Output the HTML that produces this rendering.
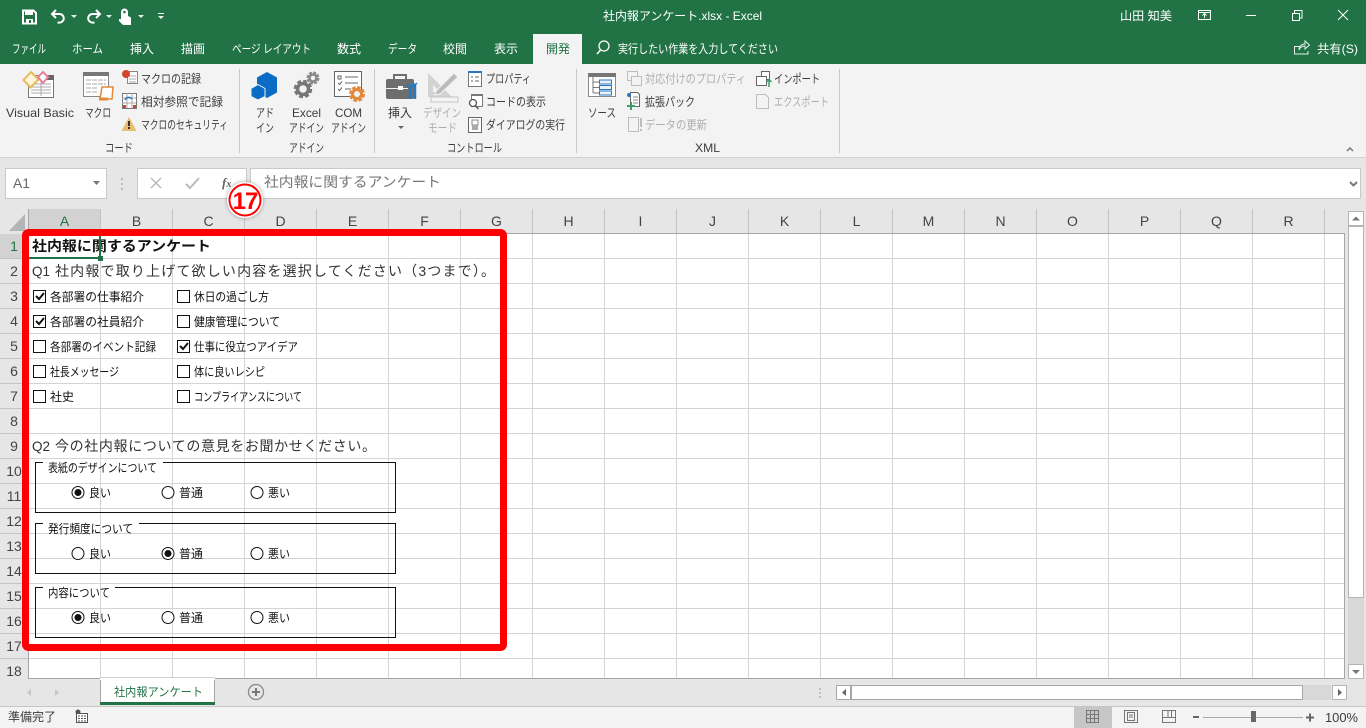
<!DOCTYPE html>
<html lang="ja"><head><meta charset="utf-8"><title>社内報アンケート.xlsx - Excel</title>
<style>
html,body{margin:0;padding:0;width:1366px;height:728px;overflow:hidden;background:#e6e6e6}
svg{display:block}
text{font-family:"Liberation Sans","Noto Sans CJK JP",sans-serif;font-size:12px;fill:#3c3c3c;white-space:pre}
.w{fill:#fff}.g{fill:#aeaeae}.b{fill:#111}.h{font-size:14px;fill:#444;text-anchor:middle}
.c{font-size:14px;fill:#333}.s{stroke:#777;fill:none}
</style></head><body>
<svg xmlns="http://www.w3.org/2000/svg" width="1366" height="728" viewBox="0 0 1366 728">
<!-- title bar -->
<rect width="1366" height="64" fill="#217346"/>
<rect x="533" y="34" width="49" height="30" fill="#f3f3f3"/>
<rect y="64" width="1366" height="93" fill="#f3f3f3"/>
<rect y="157" width="1366" height="1" fill="#d2d2d2"/>
<rect y="158" width="1366" height="51" fill="#e6e6e6"/>
<path d="M23 10.500h10.500l2.500 2.500v10.500h-13z" fill="none" stroke="#fff" stroke-width="2"/><rect x="25" y="10" width="8" height="5" fill="#fff"/><rect x="26" y="19" width="7" height="5" fill="#fff"/><rect x="29" y="20" width="2" height="3" fill="#217346"/>
<path d="M56 10l-4 4 4 4M52.500 14h7a4.300 4.300 0 0 1 0 8.600h-2" fill="none" stroke="#fff" stroke-width="2"/>
<path d="M96 10l4 4-4 4M99.500 14h-7a4.300 4.300 0 0 0 0 8.600h2" fill="none" stroke="#fff" stroke-width="2"/>
<path d="M71 15h6l-3 3zM106 15h6l-3 3zM138 15h6l-3 3zM158 16h6l-3 3z" fill="#e8f0ea"/><rect x="158" y="13" width="6" height="1" fill="#fff"/>
<path d="M121 18v-6a3.500 3.500 0 0 1 7 0v4l3 1.500v7.500h-8l-4-4v-2l2 0z" fill="#fff"/><circle cx="124.500" cy="12" r="1.300" fill="#217346"/>
<text class="w" x="603" y="20" textLength="159" lengthAdjust="spacingAndGlyphs">社内報アンケート.xlsx - Excel</text>
<text class="w" x="1120" y="20" textLength="52" lengthAdjust="spacingAndGlyphs">山田 知美</text>
<rect x="1198.500" y="10.500" width="12" height="9" fill="none" stroke="#fff"/><path d="M1198 12.500h13M1204.500 18v-4M1202.500 15.500l2-2 2 2" fill="none" stroke="#fff"/>
<rect x="1246" y="15" width="10" height="1" fill="#fff"/>
<path d="M1292.500 13.500h7v7h-7zM1294.500 13v-2.500h7.500v7.500h-2.500" fill="none" stroke="#fff"/>
<path d="M1338 10l10 10M1348 10l-10 10" stroke="#fff" fill="none"/>
<g><text class="w" x="12" y="53" textLength="34" lengthAdjust="spacingAndGlyphs">ファイル</text><text class="w" x="72" y="53" textLength="31" lengthAdjust="spacingAndGlyphs">ホーム</text><text class="w" x="130" y="53" textLength="24" lengthAdjust="spacingAndGlyphs">挿入</text><text class="w" x="181" y="53" textLength="24" lengthAdjust="spacingAndGlyphs">描画</text><text class="w" x="232" y="53" textLength="79" lengthAdjust="spacingAndGlyphs">ページ レイアウト</text><text class="w" x="337" y="53" textLength="24" lengthAdjust="spacingAndGlyphs">数式</text><text class="w" x="388" y="53" textLength="29" lengthAdjust="spacingAndGlyphs">データ</text><text class="w" x="443" y="53" textLength="24" lengthAdjust="spacingAndGlyphs">校閲</text><text class="w" x="494" y="53" textLength="24" lengthAdjust="spacingAndGlyphs">表示</text><text x="546" y="53" textLength="24" lengthAdjust="spacingAndGlyphs" style="fill:#217346">開発</text><text class="w" x="618" y="53" textLength="160" lengthAdjust="spacingAndGlyphs">実行したい作業を入力してください</text><text class="w" x="1317" y="53" textLength="41" lengthAdjust="spacingAndGlyphs">共有(S)</text></g>
<circle cx="604" cy="46" r="5" fill="none" stroke="#fff" stroke-width="1.300"/><path d="M600.500 50l-3.500 4" stroke="#fff" stroke-width="1.500"/>
<path d="M1300 46.500h-5.500v7.500h13.500v-3M1299 50c0-4 3-6 6-6v-3l4.500 4-4.500 4v-3c-2 0-5 1-6 4z" fill="none" stroke="#e8f0ea"/>
<!-- ribbon separators -->
<path d="M239.500 69v84M374.500 69v84M576.500 69v84M839.500 69v84" stroke="#c8c8c8"/>
<path d="M1347 151l3-3 3 3" fill="none" stroke="#777" stroke-width="1.500"/>
<!-- VB icon -->
<rect x="28.500" y="75.500" width="25" height="22" fill="#fff" stroke="#777"/><rect x="47" y="75" width="7" height="5" fill="#666"/>
<path d="M31 84h20M31 87h20M31 90h20M31 93h20M41 81v15" stroke="#aaa"/>
<path d="M31 72l7.500 7.500-8 8-7-7.500z" fill="#fff5d8" stroke="#e9b95e" stroke-width="2"/>
<path d="M43 72l5 5-5 6-5-6z" fill="#fff" stroke="#e8819a" stroke-width="2"/>
<!-- macro -->
<rect x="83.500" y="72.500" width="25" height="24" fill="#fff" stroke="#888"/><rect x="83" y="72" width="26" height="4" fill="#777"/>
<path d="M86 80h20M86 84h20M86 88h12M86 92h12" stroke="#aaa" stroke-dasharray="5 1"/>
<path d="M102 87h11l-1 12h-12z" fill="#fff" stroke="#e2893a" stroke-width="1.500"/><path d="M99 99h9" stroke="#e2893a" stroke-width="3"/>
<!-- record -->
<rect x="127.500" y="71.500" width="10" height="12" fill="#fff" stroke="#888"/><path d="M129 76h7M129 79h7M129 82h7" stroke="#aaa"/><circle cx="126" cy="74" r="4" fill="#d3462c"/>
<!-- relative -->
<rect x="122.500" y="93.500" width="14" height="15" fill="#fff" stroke="#777"/><path d="M127 93v15M132 93v15M122 98h14M122 103h14" stroke="#aaa"/><path d="M125 100a4 4 0 0 1 7-1" fill="none" stroke="#2a77c0" stroke-width="1.500"/><rect x="123" y="105" width="3" height="3" fill="#d3462c"/><rect x="133" y="105" width="3" height="3" fill="#d3462c"/>
<path d="M129 117l7.500 14h-15z" fill="#e9bc72"/><rect x="128" y="121" width="2" height="5" fill="#333"/><rect x="128" y="127" width="2" height="2" fill="#333"/>
<!-- addin -->
<path d="M267 72l10 5.500v15l-10 5.500-10-5.500v-15z" fill="#0b6cc5"/><path d="M258 84.500l7 4v8l-7 3.500-7-3.500v-8z" fill="#0b6cc5" stroke="#f3f3f3" stroke-width="1"/>
<circle cx="303" cy="89" r="5.500" class="s" stroke-width="3.500"/><circle cx="303" cy="89" r="8" class="s" stroke-width="2.500" stroke-dasharray="4 2.280"/>
<circle cx="313" cy="78" r="3.500" class="s" stroke-width="2.500" style="stroke:#888"/><circle cx="313" cy="78" r="5.500" class="s" stroke-width="2" stroke-dasharray="3 1.320" style="stroke:#888"/>
<rect x="334.500" y="71.500" width="27" height="25" fill="#fff" stroke="#666"/>
<path d="M345 77h13M345 83h13M345 89h6" stroke="#666"/><rect x="338" y="76" width="3" height="3" fill="#fff" stroke="#666"/><path d="M338 83l1.500 1.500 2.500-3M338 89l1.500 1.500 2.500-3" stroke="#666" fill="none"/>
<circle cx="357" cy="94" r="4.500" fill="#f3f3f3" stroke="#e2893a" stroke-width="3"/><circle cx="357" cy="94" r="6.500" fill="none" stroke="#e2893a" stroke-width="3" stroke-dasharray="3.500 1.600"/>
<!-- insert -->
<rect x="386" y="79" width="28" height="20" rx="2" fill="#6e6e6e"/><path d="M394 79v-4h12v4" fill="none" stroke="#6e6e6e" stroke-width="2"/><rect x="386" y="88" width="22" height="1" fill="#f3f3f3"/><rect x="398" y="86" width="5" height="4" fill="#fff"/>
<path d="M410 85v14M415 85v14" stroke="#2a77c0" stroke-width="2.500"/><path d="M407.500 83v3.500h5V83M413 83l2 2 2-2" fill="none" stroke="#2a77c0" stroke-width="1.500"/>
<path d="M398 126h6l-3 3z" fill="#666"/>
<!-- design -->
<path d="M428 73v24h24z" fill="#d2d2d2"/><path d="M433 85v7h7z" fill="#f3f3f3"/><path d="M436 91l18-18 4 4-18 17-5 1z" fill="#bbb" stroke="#f3f3f3"/><rect x="431" y="97" width="27" height="5" fill="#f3f3f3" stroke="#c4c4c4"/>
<!-- prop -->
<rect x="468.500" y="71.500" width="13" height="15" fill="#fff" stroke="#777"/><rect x="468" y="71" width="14" height="2" fill="#2a77c0"/><path d="M471 77h2M475 77h4M471 81h2M475 81h4" stroke="#666"/>
<rect x="471.500" y="94.500" width="11" height="12" fill="#fff" stroke="#777"/><rect x="471" y="94" width="12" height="2" fill="#777"/><circle cx="473" cy="103" r="3.500" fill="#fff" stroke="#555" stroke-width="1.300"/><path d="M475.500 106l3 3" stroke="#555" stroke-width="1.500"/>
<rect x="468.500" y="117.500" width="13" height="15" fill="#fff" stroke="#666"/><rect x="472" y="120" width="6" height="5" fill="#fff" stroke="#888"/><rect x="472" y="125" width="6" height="5" fill="#aaa"/>
<!-- xml -->
<rect x="588.500" y="73.500" width="27" height="23" fill="#fff" stroke="#888"/><rect x="588" y="73" width="28" height="4" fill="#777"/>
<path d="M593 77v16M593 82h6M593 87.500h6M593 93h6" stroke="#777"/><path d="M599.500 80h12v4h-12zM599.500 85.500h12v4h-12zM599.500 91h12v4h-12z" fill="#eaf2fa" stroke="#2a77c0"/>
<g stroke="#bdbdbd" fill="#f3f3f3"><rect x="627.500" y="71.500" width="10" height="9"/><rect x="631.500" y="76.500" width="10" height="9"/><path d="M628.500 117.500h10v14h-10z"/><path d="M641 118v9M641 129v2" stroke-width="2"/><path d="M756.500 94.500h9l3 3v11h-12z"/></g>
<path d="M630.500 92.500h7l2 2v12h-9z" fill="#fff" stroke="#666"/><path d="M633 97h5M633 100h5M633 103h5" stroke="#888"/><circle cx="629" cy="95" r="2" fill="#2a77c0"/><path d="M627 106h8M631 102v8" stroke="#3f9a6c" stroke-width="2"/>
<rect x="761.500" y="71.500" width="8" height="8" fill="#fff" stroke="#666"/><rect x="756.500" y="76.500" width="10" height="9" fill="#fff" stroke="#666"/><path d="M769 87v-7M766.500 82l2.500-2.500 2.500 2.500" fill="none" stroke="#3f9a6c" stroke-width="1.500"/>
<!-- ribbon text -->
<text x="6" y="117" textLength="68" lengthAdjust="spacingAndGlyphs">Visual Basic</text><text x="85" y="117" textLength="26" lengthAdjust="spacingAndGlyphs">マクロ</text><text x="141" y="83" textLength="60" lengthAdjust="spacingAndGlyphs">マクロの記録</text><text x="141" y="106" textLength="82" lengthAdjust="spacingAndGlyphs">相対参照で記録</text><text x="141" y="129" textLength="87" lengthAdjust="spacingAndGlyphs">マクロのセキュリティ</text><text x="105" y="152" textLength="28" lengthAdjust="spacingAndGlyphs">コード</text>
<text x="256" y="117" textLength="18" lengthAdjust="spacingAndGlyphs">アド</text><text x="256" y="132" textLength="18" lengthAdjust="spacingAndGlyphs">イン</text><text x="292" y="117" textLength="29" lengthAdjust="spacingAndGlyphs">Excel</text><text x="289" y="132" textLength="35" lengthAdjust="spacingAndGlyphs">アドイン</text><text x="335" y="117" textLength="27" lengthAdjust="spacingAndGlyphs">COM</text><text x="331" y="132" textLength="35" lengthAdjust="spacingAndGlyphs">アドイン</text><text x="289" y="152" textLength="35" lengthAdjust="spacingAndGlyphs">アドイン</text>
<text x="388" y="117" textLength="24" lengthAdjust="spacingAndGlyphs">挿入</text><text class="g" x="423" y="117" textLength="38" lengthAdjust="spacingAndGlyphs">デザイン</text><text class="g" x="428" y="132" textLength="29" lengthAdjust="spacingAndGlyphs">モード</text><text x="486" y="83" textLength="45" lengthAdjust="spacingAndGlyphs">プロパティ</text><text x="486" y="106" textLength="60" lengthAdjust="spacingAndGlyphs">コードの表示</text><text x="486" y="129" textLength="79" lengthAdjust="spacingAndGlyphs">ダイアログの実行</text><text x="447" y="152" textLength="55" lengthAdjust="spacingAndGlyphs">コントロール</text>
<text x="588" y="117" textLength="28" lengthAdjust="spacingAndGlyphs">ソース</text><text class="g" x="645" y="83" textLength="101" lengthAdjust="spacingAndGlyphs">対応付けのプロパティ</text><text x="645" y="106" textLength="50" lengthAdjust="spacingAndGlyphs">拡張パック</text><text class="g" x="645" y="129" textLength="62" lengthAdjust="spacingAndGlyphs">データの更新</text><text x="774" y="83" textLength="46" lengthAdjust="spacingAndGlyphs">インポート</text><text class="g" x="774" y="106" textLength="55" lengthAdjust="spacingAndGlyphs">エクスポート</text><text x="695" y="152" textLength="25" lengthAdjust="spacingAndGlyphs">XML</text>
<!-- formula bar -->
<rect x="5.500" y="168.500" width="101" height="30" fill="#fff" stroke="#c9c9c9"/><text x="13" y="188" textLength="17" lengthAdjust="spacingAndGlyphs" style="font-size:14px;fill:#666">A1</text><path d="M93 181h7l-3.500 4z" fill="#777"/>
<path d="M122 178v2M122 183v2M122 188v2" stroke="#aaa" stroke-width="1.500"/>
<rect x="137.500" y="168.500" width="109" height="30" fill="#fff" stroke="#c9c9c9"/>
<path d="M151 178l10 10M161 178l-10 10" stroke="#bbb" stroke-width="1.500"/><path d="M186 184l4 4 9-10" fill="none" stroke="#bbb" stroke-width="2"/>
<text x="222" y="187" style="font:italic bold 13px 'Liberation Serif',serif;fill:#666">f<tspan style="font-size:10px">x</tspan></text>
<rect x="250.500" y="168.500" width="1110" height="30" fill="#fff" stroke="#c9c9c9"/>
<text x="264" y="187" textLength="177" lengthAdjust="spacingAndGlyphs" style="font-size:14px;fill:#777">社内報に関するアンケート</text>
<path d="M1350 182l3.500 3.500 3.500-3.500" fill="none" stroke="#777" stroke-width="2"/>
<!-- headers -->
<rect y="209" width="1346" height="25" fill="#e6e6e6"/><rect x="0" y="234" width="28" height="445" fill="#e6e6e6"/>
<path d="M25 214v17H9z" fill="#b5b5b5"/>
<rect x="29" y="209" width="71" height="24" fill="#d2d2d2"/><rect y="234" width="28" height="24" fill="#d2d2d2"/>
<!-- sheet -->
<rect x="29" y="234" width="1316" height="444" fill="#fff"/>
<path stroke="#d4d4d4" d="M100.500 234v444M172.500 234v444M244.500 234v444M316.500 234v444M388.500 234v444M460.500 234v444M532.500 234v444M604.500 234v444M676.500 234v444M748.500 234v444M820.500 234v444M892.500 234v444M964.500 234v444M1036.500 234v444M1108.500 234v444M1180.500 234v444M1252.500 234v444M1324.500 234v444M29 258.500h1316M29 283.500h1316M29 308.500h1316M29 333.500h1316M29 358.500h1316M29 383.500h1316M29 408.500h1316M29 433.500h1316M29 458.500h1316M29 483.500h1316M29 508.500h1316M29 533.500h1316M29 558.500h1316M29 583.500h1316M29 608.500h1316M29 633.500h1316M29 658.500h1316"/>
<path stroke="#c4c4c4" d="M100.500 209v24M172.500 209v24M244.500 209v24M316.500 209v24M388.500 209v24M460.500 209v24M532.500 209v24M604.500 209v24M676.500 209v24M748.500 209v24M820.500 209v24M892.500 209v24M964.500 209v24M1036.500 209v24M1108.500 209v24M1180.500 209v24M1252.500 209v24M1324.500 209v24M0 258.500h28M0 283.500h28M0 308.500h28M0 333.500h28M0 358.500h28M0 383.500h28M0 408.500h28M0 433.500h28M0 458.500h28M0 483.500h28M0 508.500h28M0 533.500h28M0 558.500h28M0 583.500h28M0 608.500h28M0 633.500h28M0 658.500h28"/>
<path d="M28.500 209v469.500H1344.500V233.500H28" fill="none" stroke="#a6a6a6"/>
<g><text class="h" x="64.500" y="226" style="fill:#217346">A</text><text class="h" x="136.500" y="226">B</text><text class="h" x="208.500" y="226">C</text><text class="h" x="280.500" y="226">D</text><text class="h" x="352.500" y="226">E</text><text class="h" x="424.500" y="226">F</text><text class="h" x="496.500" y="226">G</text><text class="h" x="568.500" y="226">H</text><text class="h" x="640.500" y="226">I</text><text class="h" x="712.500" y="226">J</text><text class="h" x="784.500" y="226">K</text><text class="h" x="856.500" y="226">L</text><text class="h" x="928.500" y="226">M</text><text class="h" x="1000.500" y="226">N</text><text class="h" x="1072.500" y="226">O</text><text class="h" x="1144.500" y="226">P</text><text class="h" x="1216.500" y="226">Q</text><text class="h" x="1288.500" y="226">R</text></g>
<g><text class="h" x="14" y="251" style="fill:#217346">1</text><text class="h" x="14" y="276">2</text><text class="h" x="14" y="301">3</text><text class="h" x="14" y="326">4</text><text class="h" x="14" y="351">5</text><text class="h" x="14" y="376">6</text><text class="h" x="14" y="401">7</text><text class="h" x="14" y="426">8</text><text class="h" x="14" y="451">9</text><text class="h" x="14" y="476">10</text><text class="h" x="14" y="501">11</text><text class="h" x="14" y="526">12</text><text class="h" x="14" y="551">13</text><text class="h" x="14" y="576">14</text><text class="h" x="14" y="601">15</text><text class="h" x="14" y="626">16</text><text class="h" x="14" y="651">17</text><text class="h" x="14" y="676">18</text></g>
<!-- selection -->
<path d="M29 258h71" stroke="#217346" stroke-width="2"/>
<!-- cell text -->
<text x="32" y="251" textLength="179" lengthAdjust="spacingAndGlyphs" style="font-size:14px;font-weight:bold;fill:#111">社内報に関するアンケート</text>
<path d="M100 234v24" stroke="#217346" stroke-width="2"/><rect x="98" y="256" width="5" height="5" fill="#217346"/>
<text class="c" x="32" y="276" textLength="18" lengthAdjust="spacingAndGlyphs">Q1</text><text class="c" x="55" y="276" textLength="440" lengthAdjust="spacing">社内報で取り上げて欲しい内容を選択してください（3つまで）。</text>
<text class="c" x="32" y="451" textLength="18" lengthAdjust="spacingAndGlyphs">Q2</text><text class="c" x="55" y="451" textLength="321" lengthAdjust="spacing">今の社内報についての意見をお聞かせください。</text>
<!-- checkboxes -->
<g fill="#fff" stroke="#111"><rect x="33.500" y="290.500" width="12" height="12"/><rect x="33.500" y="315.500" width="12" height="12"/><rect x="33.500" y="340.500" width="12" height="12"/><rect x="33.500" y="365.500" width="12" height="12"/><rect x="33.500" y="390.500" width="12" height="12"/><rect x="177.500" y="290.500" width="12" height="12"/><rect x="177.500" y="315.500" width="12" height="12"/><rect x="177.500" y="340.500" width="12" height="12"/><rect x="177.500" y="365.500" width="12" height="12"/><rect x="177.500" y="390.500" width="12" height="12"/></g>
<path d="M36 296l3 3 5-6M36 321l3 3 5-6M180 346l3 3 5-6" fill="none" stroke="#111" stroke-width="2"/>
<g><text class="b" x="50" y="301" textLength="94" lengthAdjust="spacingAndGlyphs">各部署の仕事紹介</text><text class="b" x="50" y="326" textLength="94" lengthAdjust="spacingAndGlyphs">各部署の社員紹介</text><text class="b" x="50" y="351" textLength="106" lengthAdjust="spacingAndGlyphs">各部署のイベント記録</text><text class="b" x="50" y="376" textLength="69" lengthAdjust="spacingAndGlyphs">社長メッセージ</text><text class="b" x="50" y="401" textLength="24" lengthAdjust="spacingAndGlyphs">社史</text><text class="b" x="194" y="301" textLength="75" lengthAdjust="spacingAndGlyphs">休日の過ごし方</text><text class="b" x="194" y="326" textLength="86" lengthAdjust="spacingAndGlyphs">健康管理について</text><text class="b" x="194" y="351" textLength="104" lengthAdjust="spacingAndGlyphs">仕事に役立つアイデア</text><text class="b" x="194" y="376" textLength="71" lengthAdjust="spacingAndGlyphs">体に良いレシピ</text><text class="b" x="194" y="401" textLength="108" lengthAdjust="spacingAndGlyphs">コンプライアンスについて</text></g>
<!-- groups -->
<path d="M43 462.500H35.500v50h360v-50H163M43 523.500H35.500v50h360v-50H139M43 587.500H35.500v50h360v-50H115" fill="none" stroke="#111"/>
<text class="b" x="48" y="472" textLength="109" lengthAdjust="spacingAndGlyphs">表紙のデザインについて</text><text class="b" x="48" y="533" textLength="85" lengthAdjust="spacingAndGlyphs">発行頻度について</text><text class="b" x="48" y="597" textLength="62" lengthAdjust="spacingAndGlyphs">内容について</text>
<g fill="#fff" stroke="#111"><circle cx="78" cy="492.500" r="6"/><circle cx="168" cy="492.500" r="6"/><circle cx="257" cy="492.500" r="6"/><circle cx="78" cy="553.500" r="6"/><circle cx="168" cy="553.500" r="6"/><circle cx="257" cy="553.500" r="6"/><circle cx="78" cy="617.500" r="6"/><circle cx="168" cy="617.500" r="6"/><circle cx="257" cy="617.500" r="6"/></g>
<circle cx="78" cy="492.500" r="3.500" fill="#111"/><circle cx="168" cy="553.500" r="3.500" fill="#111"/><circle cx="78" cy="617.500" r="3.500" fill="#111"/>
<text class="b" x="89" y="497" textLength="22" lengthAdjust="spacingAndGlyphs">良い</text><text class="b" x="179" y="497" textLength="24" lengthAdjust="spacingAndGlyphs">普通</text><text class="b" x="268" y="497" textLength="22" lengthAdjust="spacingAndGlyphs">悪い</text><text class="b" x="89" y="558" textLength="22" lengthAdjust="spacingAndGlyphs">良い</text><text class="b" x="179" y="558" textLength="24" lengthAdjust="spacingAndGlyphs">普通</text><text class="b" x="268" y="558" textLength="22" lengthAdjust="spacingAndGlyphs">悪い</text><text class="b" x="89" y="622" textLength="22" lengthAdjust="spacingAndGlyphs">良い</text><text class="b" x="179" y="622" textLength="24" lengthAdjust="spacingAndGlyphs">普通</text><text class="b" x="268" y="622" textLength="22" lengthAdjust="spacingAndGlyphs">悪い</text>
<!-- red frame -->
<rect x="25.500" y="232.500" width="478" height="415" rx="3" fill="none" stroke="#f00" stroke-width="7"/>
<!-- callout -->
<circle cx="245" cy="200" r="18" fill="#fff" style="filter:drop-shadow(0 0 2px rgba(0,0,0,.35))"/>
<circle cx="245" cy="200" r="15.500" fill="#fff" stroke="#f00" stroke-width="2"/>
<text x="245" y="209" text-anchor="middle" style="font-size:24px;font-weight:bold;fill:#f00;letter-spacing:-1px">17</text>
<!-- v scroll -->
<rect x="1348.500" y="211.500" width="15" height="14" fill="#fff" stroke="#b5b5b5"/><path d="M1352 220.500h8l-4-4z" fill="#777"/>
<rect x="1348.500" y="226.500" width="15" height="371" fill="#fff" stroke="#b5b5b5"/><rect x="1348" y="598" width="16" height="66" fill="#d8d8d8"/>
<rect x="1348.500" y="664.500" width="15" height="14" fill="#fff" stroke="#b5b5b5"/><path d="M1352 670h8l-4 4z" fill="#777"/>
<!-- tabs -->
<path d="M0 706.500h1366" stroke="#c6c6c6"/>
<rect x="100.500" y="678" width="114" height="26" fill="#fff" stroke="#a6a6a6"/><rect x="100" y="678" width="115" height="2" fill="#fff"/><rect x="100" y="702" width="115" height="3" fill="#217346"/>
<text x="114" y="696" textLength="89" lengthAdjust="spacingAndGlyphs" style="fill:#217346">社内報アンケート</text>
<path d="M31 689l-4 3.500 4 3.500zM55 689l4 3.500-4 3.500z" fill="#c6c6c6"/>
<circle cx="256" cy="692" r="7.500" fill="none" stroke="#8a8a8a" stroke-width="1.300"/><path d="M252 692h8M256 688v8" stroke="#777" stroke-width="2"/>
<path d="M820 688v2M820 692v2M820 696v2" stroke="#999"/>
<rect x="836.500" y="685.500" width="14" height="14" fill="#fff" stroke="#a6a6a6"/><path d="M846 689v7l-4-3.500z" fill="#666"/>
<rect x="851.500" y="685.500" width="451" height="14" fill="#fff" stroke="#a6a6a6"/><rect x="1303" y="685" width="28" height="15" fill="#d8d8d8"/>
<rect x="1332.500" y="685.500" width="14" height="14" fill="#fff" stroke="#b5b5b5"/><path d="M1338 689v7l4-3.500z" fill="#666"/>
<!-- status -->
<rect y="707" width="1366" height="21" fill="#f3f3f3"/>
<text x="8" y="721" textLength="48" lengthAdjust="spacingAndGlyphs">準備完了</text>
<circle cx="78" cy="712" r="2.500" fill="#555"/><rect x="76.500" y="713.500" width="11" height="9" fill="#fff" stroke="#555"/><path d="M78 716h8M78 718.500h8M78 721h8" stroke="#555" stroke-dasharray="2 1"/>
<rect x="1074" y="707" width="38" height="21" fill="#c6c6c6"/>
<rect x="1086.500" y="710.500" width="12" height="12" fill="none" stroke="#777"/><path d="M1090.500 710v13M1094.500 710v13M1086 714.500h13M1086 718.500h13" stroke="#777"/>
<rect x="1124.500" y="710.500" width="13" height="12" fill="none" stroke="#777"/><rect x="1127.500" y="712.500" width="7" height="8" fill="none" stroke="#777"/><path d="M1129 715h4M1129 717h4" stroke="#777"/>
<path d="M1162.500 710.500h13v12h-13zM1162.500 717.500h5.500v-7M1168 717.500h7.500M1171.500 710v7" fill="none" stroke="#777"/>
<rect x="1193" y="716" width="6" height="2" fill="#666"/><rect x="1203" y="717" width="100" height="1" fill="#aaa"/><rect x="1251" y="711" width="5" height="11" fill="#666"/>
<path d="M1306 717.500h8M1310 713.500v8" stroke="#666" stroke-width="2"/>
<text x="1325" y="722" textLength="33" lengthAdjust="spacingAndGlyphs" style="font-size:13px">100%</text>
</svg>
</body></html>
